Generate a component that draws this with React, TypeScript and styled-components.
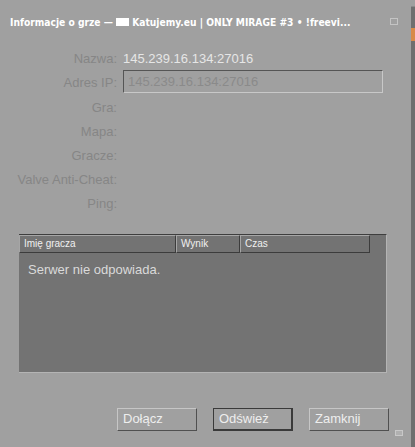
import React from "react";
import styled, { createGlobalStyle } from "styled-components";

const Global = createGlobalStyle`
  html, body { margin: 0; padding: 0; background: #a0a0a0; }
  body { font-family: "DejaVu Sans", Verdana, sans-serif; }
`;

const Screen = styled.div`
  display: flex;
  width: 415px;
  height: 447px;
  overflow: hidden;
`;

const Window = styled.div`
  position: relative;
  width: 411px;
  height: 447px;
  background: #a0a0a0;
  display: flex;
  flex-direction: column;
  box-sizing: border-box;
`;

const SideStrip = styled.div`
  width: 4px;
  height: 447px;
  background: #6f6f6f;
  display: flex;
  flex-direction: column;
  border-top: 1px solid #8a8a8a;
  margin-top: 6px;
`;

const Orange = styled.div`
  margin-top: 21px;
  height: 13px;
  background: #d88a48;
`;

const TitleBar = styled.div`
  height: 44px;
  display: flex;
  align-items: center;
  padding: 0 13px 0 10px;
  justify-content: space-between;
`;

const Title = styled.div`
  color: #ffffff;
  font-family: "DejaVu Sans Condensed", "DejaVu Sans", Verdana, sans-serif;
  font-stretch: condensed;
  font-weight: bold;
  font-size: 10.2px;
  white-space: nowrap;
  display: flex;
  align-items: center;
`;

const WhiteBlock = styled.span`
  display: inline-block;
  width: 13px;
  height: 8px;
  background: #ffffff;
  margin-right: 3px;
`;

const CloseBox = styled.div`
  width: 6px;
  height: 5px;
  border: 1px solid #c4c4c4;
  margin-top: -2px;
`;

const Form = styled.div`
  display: grid;
  grid-template-columns: 117px 260px;
  grid-template-rows: 20px 23px 24px 24px 24px 24px 24px;
  column-gap: 6px;
  margin-top: 6px;
`;

const Label = styled.div<{ $kind?: "first" | "box" | "plain" }>`
  text-align: right;
  color: #868686;
  font-family: "Liberation Sans", Arial, sans-serif;
  font-size: 13px;
  line-height: ${(p) => (p.$kind === "box" ? "23px" : p.$kind === "first" ? "17px" : "24px")};
  padding-top: ${(p) => (p.$kind === "box" ? "1px" : p.$kind === "first" ? "0" : "3px")};
  white-space: nowrap;
  height: 0;
  overflow: visible;
`;

const Value = styled.div`
  color: #e6e6e6;
  font-family: "Liberation Sans", Arial, sans-serif;
  font-size: 13px;
  line-height: 17px;
  white-space: nowrap;
`;

const TextBox = styled.div`
  box-sizing: border-box;
  height: 23px;
  border-top: 1px solid #555555;
  border-left: 1px solid #555555;
  border-right: 1px solid #c8c8c8;
  border-bottom: 1px solid #c8c8c8;
  color: #8a8a8a;
  font-family: "Liberation Sans", Arial, sans-serif;
  font-size: 13px;
  line-height: 21px;
  padding-left: 4px;
  white-space: nowrap;
`;

const Table = styled.div`
  margin: 21px 0 0 19px;
  width: 368px;
  height: 139px;
  box-sizing: border-box;
  background: #737373;
  border-top: 1px solid #3e3e3e;
  border-right: 1px solid #b4b4b4;
  border-bottom: 1px solid #b4b4b4;
  display: flex;
  flex-direction: column;
`;

const HeaderRow = styled.div`
  display: flex;
  height: 18px;
`;

const HeaderCell = styled.div<{ $w: number }>`
  box-sizing: border-box;
  width: ${(p) => p.$w}px;
  height: 18px;
  border-top: 1px solid #a6a6a6;
  border-left: 1px solid #a6a6a6;
  border-right: 1px solid #3c3c3c;
  border-bottom: 1px solid #3c3c3c;
  color: #f0f0f0;
  font-family: "Liberation Sans", Arial, sans-serif;
  font-size: 10px;
  line-height: 16px;
  padding-left: 4px;
  background: #737373;
`;

const EmptyMsg = styled.div`
  color: #dadada;
  font-family: "Liberation Sans", Arial, sans-serif;
  font-size: 13px;
  padding: 9px 0 0 9px;
`;

const Buttons = styled.div`
  display: flex;
  gap: 16px;
  margin: 35px 0 0 117px;
`;

const Button = styled.div<{ $pressed?: boolean }>`
  box-sizing: border-box;
  width: 80px;
  height: 23px;
  border-top: 1px solid ${(p) => (p.$pressed ? "#3a3a3a" : "#c6c6c6")};
  border-left: 1px solid ${(p) => (p.$pressed ? "#3a3a3a" : "#c6c6c6")};
  border-right: ${(p) => (p.$pressed ? "2px solid #3a3a3a" : "1px solid #505050")};
  border-bottom: ${(p) => (p.$pressed ? "2px solid #3a3a3a" : "1px solid #505050")};
  color: #eeeeee;
  font-family: "Liberation Sans", Arial, sans-serif;
  font-size: 13px;
  line-height: 20px;
  padding-left: 5px;
`;

const Grip = styled.div`
  position: absolute;
  right: 8px;
  bottom: 11px;
  width: 6px;
  height: 4px;
  border: 1px solid #c8c8c8;
  background: #b0b0b0;
`;

const rows = ["Gra:", "Mapa:", "Gracze:", "Valve Anti-Cheat:", "Ping:"];

export default function App() {
  return (
    <>
      <Global />
      <Screen>
        <Window>
          <TitleBar>
            <Title>
              Informacje o grze —&nbsp;<WhiteBlock />Katujemy.eu | ONLY MIRAGE #3 • !freevi...
            </Title>
            <CloseBox />
          </TitleBar>
          <Form>
            <Label $kind="first">Nazwa:</Label>
            <Value>145.239.16.134:27016</Value>
            <Label $kind="box">Adres IP:</Label>
            <TextBox>145.239.16.134:27016</TextBox>
            {rows.map((r) => (
              <React.Fragment key={r}>
                <Label $kind="plain">{r}</Label>
                <div />
              </React.Fragment>
            ))}
          </Form>
          <Table>
            <HeaderRow>
              <HeaderCell $w={157}>Imię gracza</HeaderCell>
              <HeaderCell $w={64}>Wynik</HeaderCell>
              <HeaderCell $w={130}>Czas</HeaderCell>
            </HeaderRow>
            <EmptyMsg>Serwer nie odpowiada.</EmptyMsg>
          </Table>
          <Buttons>
            <Button>Dołącz</Button>
            <Button $pressed>Odśwież</Button>
            <Button>Zamknij</Button>
          </Buttons>
          <Grip />
        </Window>
        <SideStrip>
          <Orange />
        </SideStrip>
      </Screen>
    </>
  );
}
